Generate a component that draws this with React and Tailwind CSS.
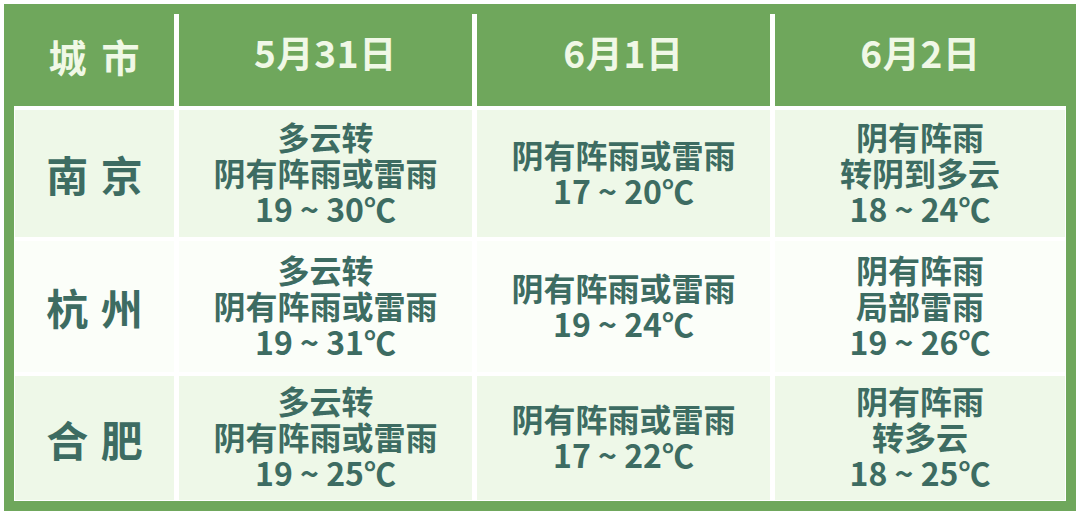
import React from 'react';

const days = ['5月31日', '6月1日', '6月2日'];

const rows = [
  {
    city: '南京',
    bg: 'bg-[#eef8e8]',
    cells: [
      ['多云转', '阴有阵雨或雷雨', '19 ~ 30℃'],
      ['阴有阵雨或雷雨', '17 ~ 20℃'],
      ['阴有阵雨', '转阴到多云', '18 ~ 24℃'],
    ],
  },
  {
    city: '杭州',
    bg: 'bg-[#fbfef9]',
    cells: [
      ['多云转', '阴有阵雨或雷雨', '19 ~ 31℃'],
      ['阴有阵雨或雷雨', '19 ~ 24℃'],
      ['阴有阵雨', '局部雷雨', '19 ~ 26℃'],
    ],
  },
  {
    city: '合肥',
    bg: 'bg-[#eef8e8]',
    cells: [
      ['多云转', '阴有阵雨或雷雨', '19 ~ 25℃'],
      ['阴有阵雨或雷雨', '17 ~ 22℃'],
      ['阴有阵雨', '转多云', '18 ~ 25℃'],
    ],
  },
];

const font = { fontFamily: '"Noto Sans CJK SC", "Noto Sans", sans-serif' };

const App = () => {
  return (
    <div className="w-[1080px] h-[515px] bg-white p-[4px]" style={font}>
      <div className="h-[507px] bg-[#6fa75c] px-[10px] pb-[10px] flex flex-col">
        {/* header */}
        <div className="h-[102px] flex text-[#f0f8e6] font-bold">
          <div className="w-[160px] flex items-center justify-center text-[38px] tracking-[0.4em] pl-[0.4em]">
            城市
          </div>
          {days.map((d, i) => (
            <React.Fragment key={d}>
              <div className="w-[5px] mt-[10px] bg-white" />
              <div className={`${i === 2 ? 'flex-1' : 'w-[293px]'} flex items-center justify-center text-[37px] tracking-[0.02em] pb-[4px]`}>
                {d}
              </div>
            </React.Fragment>
          ))}
        </div>

        {/* body */}
        <div className="flex-1 bg-white px-[1px] pb-[1px] pt-[4px] grid grid-cols-[159px_293px_293px_1fr] grid-rows-[127px_131px_1fr] gap-x-[5px] gap-y-[4px] text-[#3d6c62]">
          {rows.map(row => (
            <React.Fragment key={row.city}>
              <div className={`${row.bg} flex items-center justify-center text-[42px] font-bold tracking-[0.3em] pl-[0.3em]`}>
                {row.city}
              </div>
              {row.cells.map((lines, i) => (
                <div key={i} className={`${row.bg} flex flex-col items-center justify-center text-[32px] leading-[36px] font-semibold pb-[4px]`}>
                  {lines.map(l => (
                    <div key={l}>{l}</div>
                  ))}
                </div>
              ))}
            </React.Fragment>
          ))}
        </div>
      </div>
    </div>
  );
};

export default App;
